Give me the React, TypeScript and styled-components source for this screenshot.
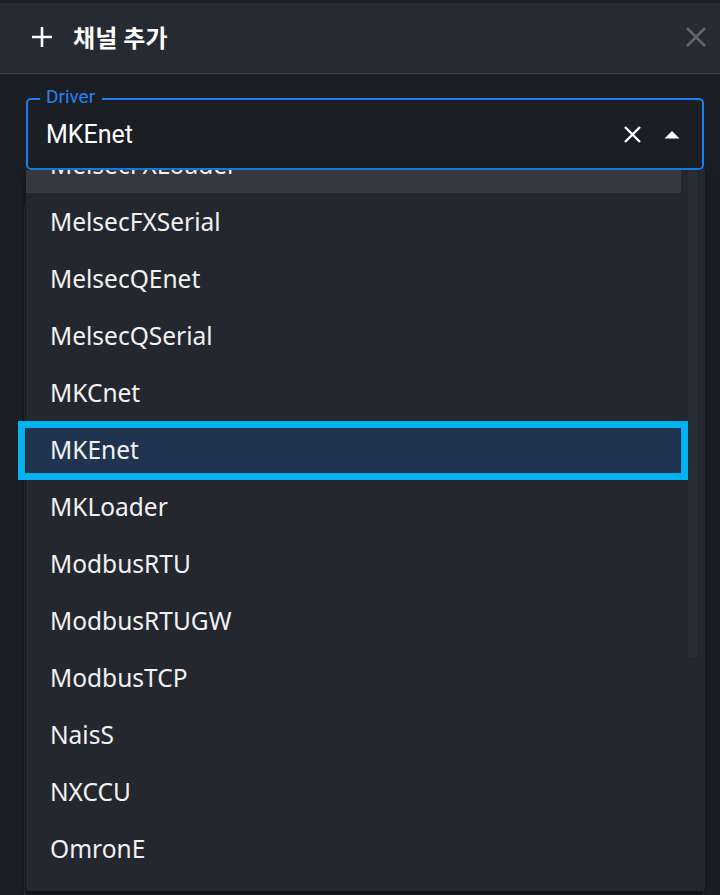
import React from "react";
import styled, { createGlobalStyle } from "styled-components";

const Global = createGlobalStyle`
  html, body { margin: 0; padding: 0; background: #1b1e24; overflow: hidden; }
  * { box-sizing: border-box; }
`;

const Page = styled.div`
  position: relative;
  width: 720px;
  height: 895px;
  overflow: hidden;
  background: #1b1e24;
  font-family: Roboto, "Noto Sans", "Noto Sans CJK KR", sans-serif;
`;

const TopStrip = styled.div`
  height: 3px;
  background: #1a1d22;
`;

const Header = styled.header`
  height: 71px;
  background: #262a33;
  border-bottom: 1px solid #3a3f48;
  display: flex;
  align-items: center;
  padding: 0 12px 3px 31px;
`;

const Title = styled.h1`
  margin: 0 0 0 20px;
  flex: 1;
  font-family: "Noto Sans CJK KR", "Noto Sans", sans-serif;
  font-weight: 700;
  font-size: 24px;
  color: #ffffff;
  letter-spacing: 0.2px;
`;

const IconButton = styled.button`
  border: 0;
  background: transparent;
  padding: 0;
  display: flex;
  align-items: center;
  justify-content: center;
  cursor: pointer;
`;

const Body = styled.div`
  padding: 24px 16px 0 26px;
  position: relative;
  height: 821px;
`;

const Field = styled.div`
  position: relative;
  height: 72px;
  border: 2px solid #1a7ff0;
  border-radius: 5px;
  display: flex;
  align-items: center;
  padding: 0 22px 0 18px;
  gap: 22px;
`;

const Legend = styled.span`
  position: absolute;
  top: -14px;
  left: 12px;
  padding: 0 7px 0 6px;
  background: #1b1e24;
  color: #2582f0;
  font-size: 19px;
  line-height: 22px;
`;

const Value = styled.span`
  flex: 1;
  color: #ffffff;
  font-size: 25px;
  padding-top: 1px;
`;

const BehindBox = styled.div`
  margin-top: 36px;
  margin-left: -2px;
  height: 720px;
  border-left: 1px solid #2a2e36;
  border-right: 1px solid #2a2e36;
`;

const Dropdown = styled.div`
  position: absolute;
  top: 170px;
  left: 26px;
  width: 679px;
  height: 721px;
  background: #25272f;
  border-radius: 0 0 4px 4px;
  box-shadow: 0 4px 8px rgba(0, 0, 0, 0.5);
`;

const Viewport = styled.div`
  height: 100%;
  display: flex;
  overflow: hidden;
  border-radius: 0 0 4px 4px;
`;

const List = styled.ul`
  list-style: none;
  margin: -34px 0 0 0;
  padding: 0;
  width: 655px;
`;

const Item = styled.li<{ $focused?: boolean; $selected?: boolean }>`
  height: 57px;
  display: flex;
  align-items: center;
  padding-left: 24px;
  font-family: "Noto Sans", sans-serif;
  font-size: 24.5px;
  color: #f2f2f2;
  background: ${(p) => (p.$selected ? "#21344f" : p.$focused ? "#35383e" : "transparent")};
`;

const Annotation = styled.div`
  position: absolute;
  top: 251px;
  left: -8px;
  width: 670px;
  height: 59px;
  border: 7px solid #00b2f0;
  pointer-events: none;
`;

const ScrollGutter = styled.div`
  flex: 1;
  padding: 0 7px;
`;

const ScrollTrack = styled.div`
  width: 9px;
  height: 487px;
  background: #292d35;
`;

const items = [
  "MelsecFXLoader",
  "MelsecFXSerial",
  "MelsecQEnet",
  "MelsecQSerial",
  "MKCnet",
  "MKEnet",
  "MKLoader",
  "ModbusRTU",
  "ModbusRTUGW",
  "ModbusTCP",
  "NaisS",
  "NXCCU",
  "OmronE",
];

export default function App() {
  return (
    <Page>
      <Global />
      <TopStrip />
      <Header>
        <svg width="22" height="22" viewBox="0 0 22 22">
          <path d="M11 1v20M1 11h20" stroke="#ffffff" strokeWidth="2.6" fill="none" />
        </svg>
        <Title>채널 추가</Title>
        <IconButton aria-label="close">
          <svg width="24" height="24" viewBox="0 0 24 24">
            <path d="M3 3l18 18M21 3L3 21" stroke="#5f6673" strokeWidth="2.6" fill="none" />
          </svg>
        </IconButton>
      </Header>
      <Body>
        <Field>
          <Legend>Driver</Legend>
          <Value>MKEnet</Value>
          <IconButton aria-label="clear">
            <svg width="19" height="19" viewBox="0 0 19 19">
              <path d="M2 2l15 15M17 2L2 17" stroke="#ffffff" strokeWidth="2.4" fill="none" />
            </svg>
          </IconButton>
          <IconButton aria-label="toggle">
            <svg width="16" height="9" viewBox="0 0 16 9">
              <path d="M0.5 8.5L8 1l7.5 7.5z" fill="#ffffff" />
            </svg>
          </IconButton>
        </Field>
        <BehindBox />
      </Body>
      <Dropdown>
        <Viewport>
          <List>
            {items.map((name, i) => (
              <Item key={name} $focused={i === 0} $selected={name === "MKEnet"}>
                {name}
              </Item>
            ))}
          </List>
          <ScrollGutter>
            <ScrollTrack />
          </ScrollGutter>
        </Viewport>
        <Annotation />
      </Dropdown>
    </Page>
  );
}
